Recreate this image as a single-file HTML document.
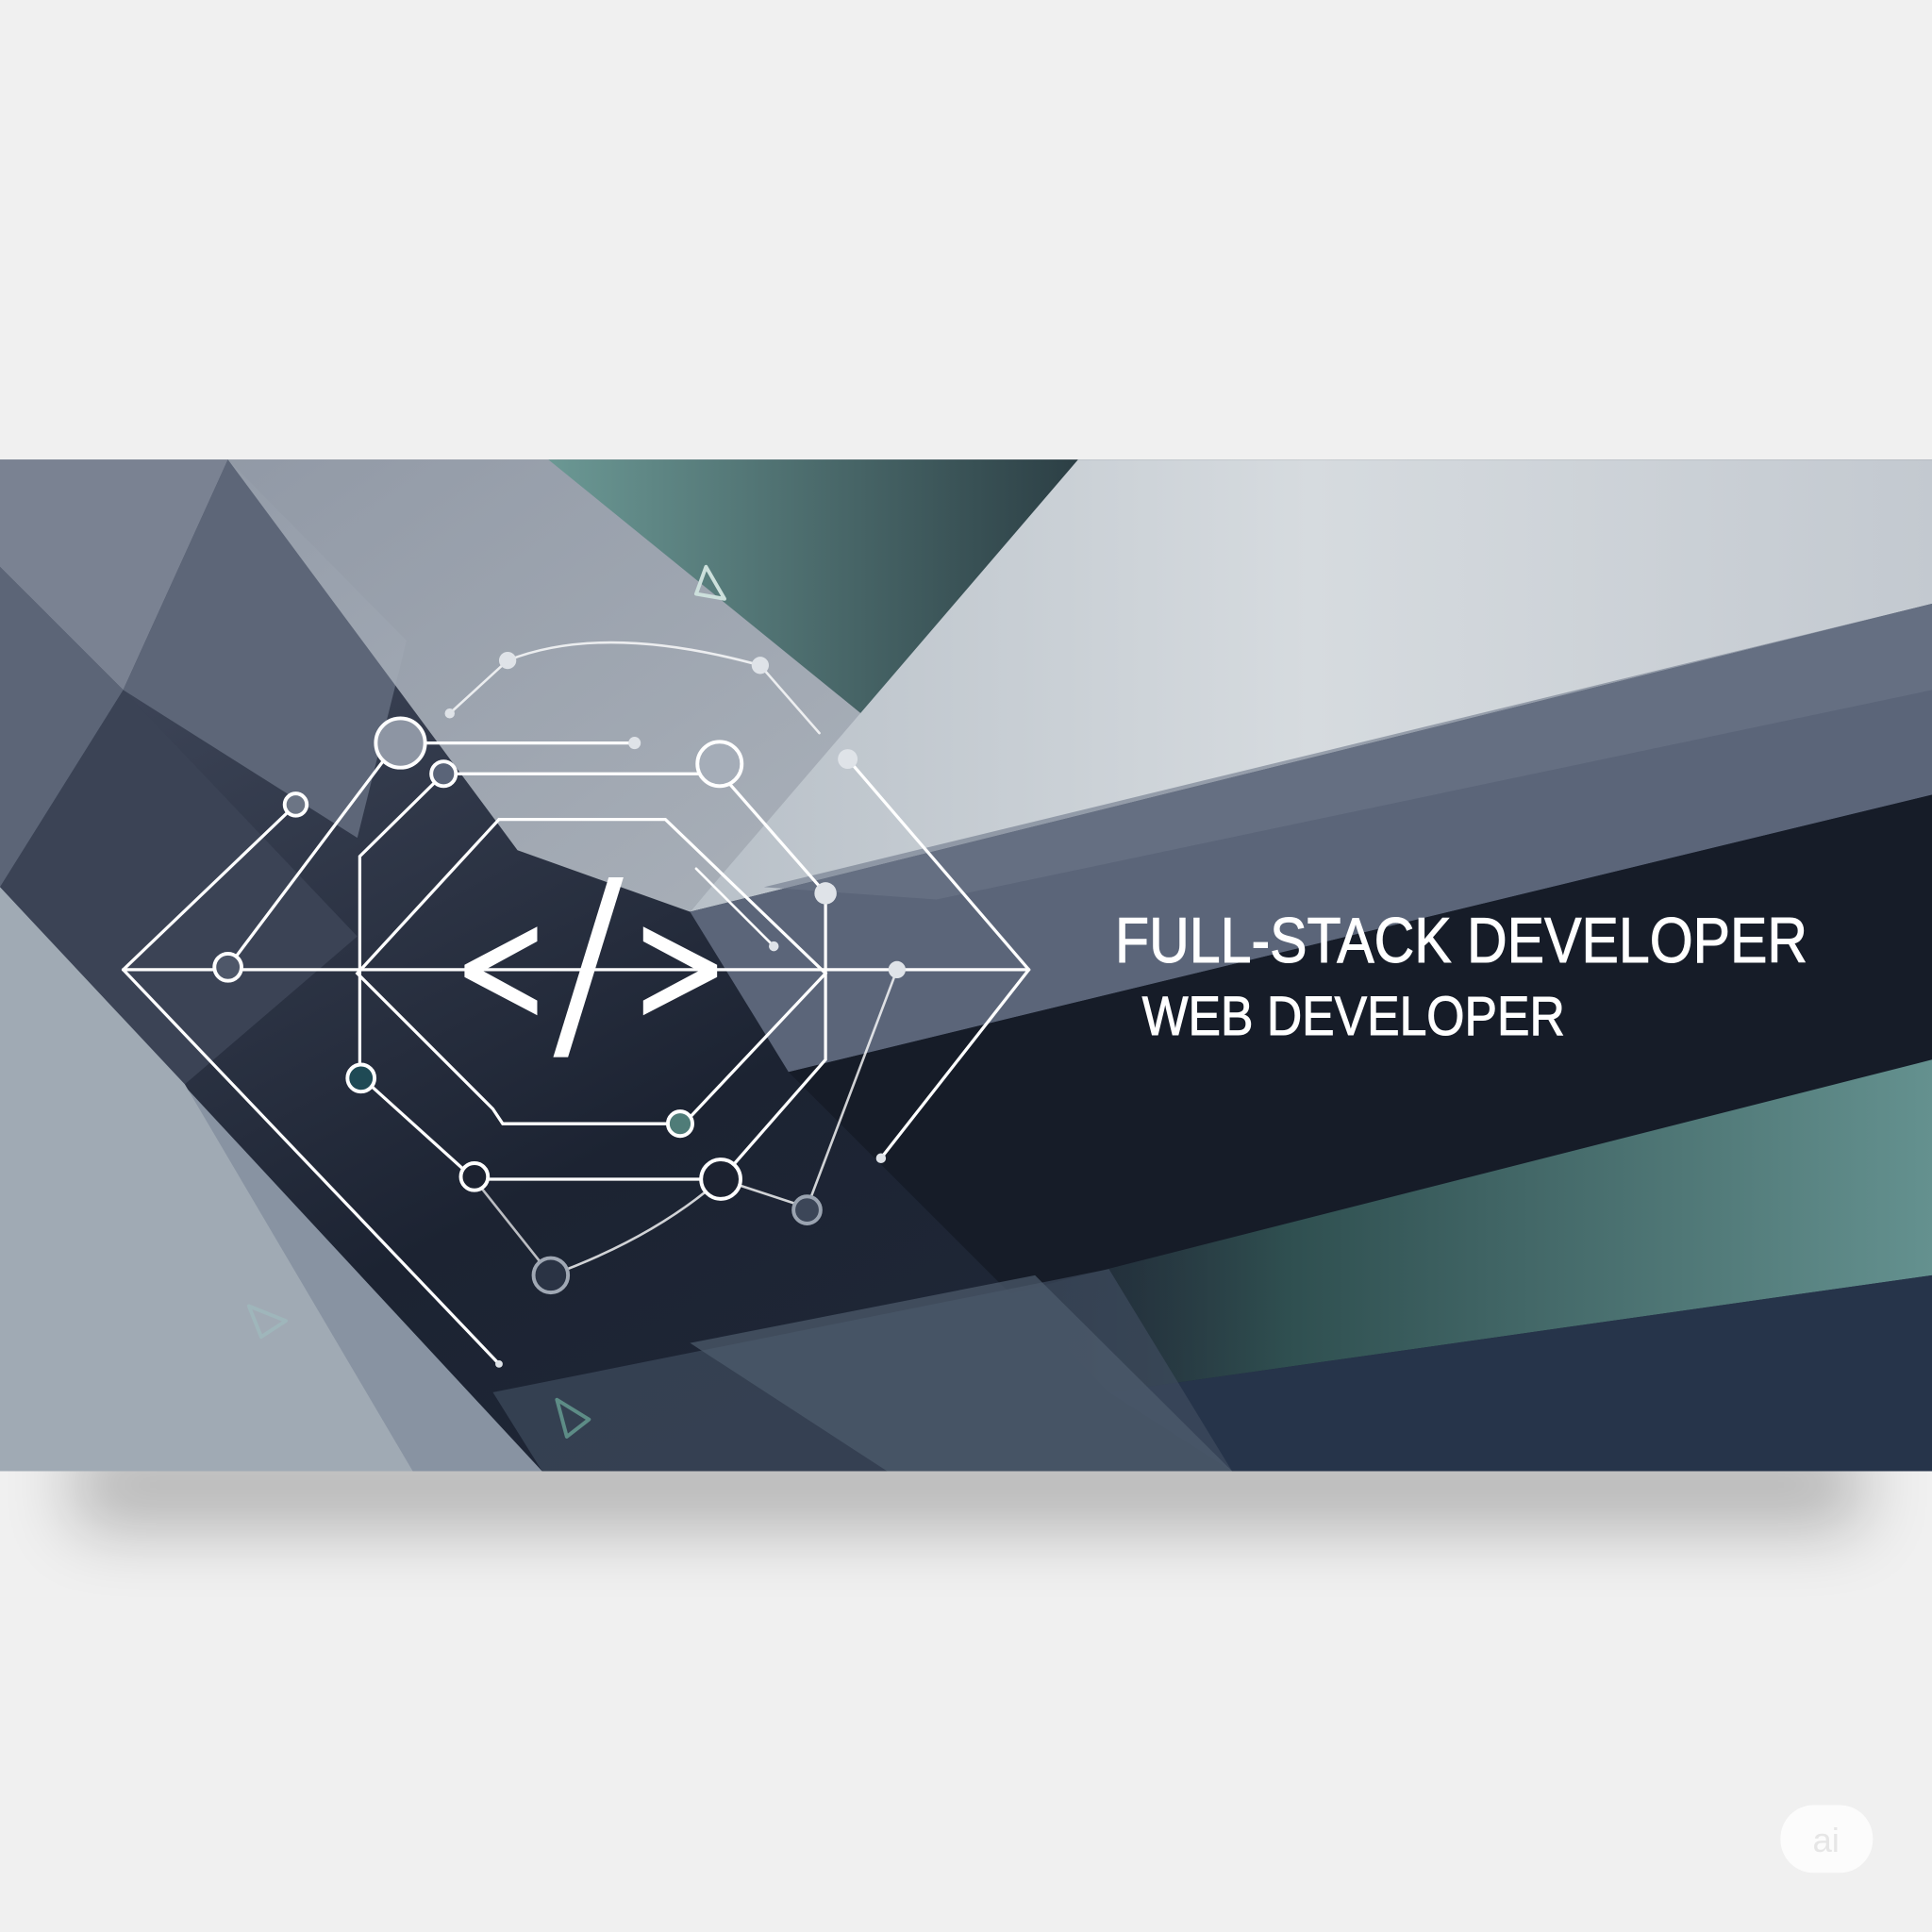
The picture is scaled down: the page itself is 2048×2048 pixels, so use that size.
<!DOCTYPE html>
<html><head><style>
html,body{margin:0;padding:0;background:#f0f0f0;}
svg{display:block}
</style></head><body>
<svg width="2048" height="2048" viewBox="0 0 1568 1568" xmlns="http://www.w3.org/2000/svg">
<defs>
<linearGradient id="bg" x1="0" y1="0" x2="1" y2="1">
<stop offset="0" stop-color="#4a5266"/><stop offset="0.5" stop-color="#1c2332"/><stop offset="1" stop-color="#222c3d"/>
</linearGradient>
<linearGradient id="light" x1="0" y1="0" x2="1" y2="0">
<stop offset="0" stop-color="#b8c0c8"/><stop offset="0.5" stop-color="#d6dbdf"/><stop offset="1" stop-color="#c3c9d0"/>
</linearGradient>
<linearGradient id="teal" x1="0" y1="0" x2="1" y2="0">
<stop offset="0" stop-color="#2a3a40" stop-opacity="0"/><stop offset="0.3" stop-color="#2f4f50"/><stop offset="1" stop-color="#64918f"/>
</linearGradient>
<linearGradient id="teal2" x1="0" y1="0" x2="1" y2="0">
<stop offset="0" stop-color="#6b9894"/><stop offset="1" stop-color="#2c3f45"/>
</linearGradient>
<linearGradient id="band" x1="0" y1="0" x2="1" y2="1">
<stop offset="0" stop-color="#9aa2ae"/><stop offset="1" stop-color="#b9c0c8"/>
</linearGradient>
<filter id="sh" x="-10%" y="-80%" width="120%" height="260%"><feGaussianBlur stdDeviation="28"/></filter>
</defs>
<rect width="1568" height="1568" fill="#f0f0f0"/>
<rect x="60" y="1170" width="1450" height="70" fill="#000" opacity="0.25" filter="url(#sh)"/>
<svg x="0" y="373" width="1568" height="821" viewBox="0 373 1568 821">
<rect x="0" y="373" width="1568" height="821" fill="url(#bg)"/>
<!-- left -->
<polygon points="0,373 185,373 100,560 0,460" fill="#7a8292"/>
<polygon points="0,460 100,560 0,720" fill="#5c6577"/>
<polygon points="100,560 185,373 330,520 290,680" fill="#5d6678"/>
<polygon points="0,720 100,560 290,760 150,880" fill="#3b4355"/>
<polygon points="0,720 440,1194 0,1194" fill="#8893a2"/>
<polygon points="0,720 150,880 335,1194 0,1194" fill="#a0aab4"/>
<!-- light diagonal band -->
<polygon points="185,373 450,373 700,580 560,740 420,690" fill="url(#band)" opacity="0.9"/>
<!-- teal top -->
<polygon points="445,373 875,373 700,580" fill="url(#teal2)"/>
<!-- top right light -->
<polygon points="875,373 1568,373 1568,490 560,740" fill="url(#light)"/>
<!-- grey band -->
<polygon points="560,740 1568,490 1568,645 640,870" fill="#5b6579"/>
<polygon points="620,720 1568,490 1568,560 760,730" fill="#6d7689" opacity="0.6"/>
<!-- dark band -->
<polygon points="640,870 1568,645 1568,860 820,1050" fill="#161c28"/>
<!-- teal band -->
<polygon points="820,1050 1568,860 1568,1035 900,1130" fill="url(#teal)"/>
<!-- bottom navy -->
<polygon points="900,1130 1568,1035 1568,1194 1000,1194" fill="#26344a"/>
<polygon points="400,1130 900,1030 1000,1194 440,1194" fill="#3f4c5e" opacity="0.7"/>
<polygon points="560,1090 840,1035 1000,1194 720,1194" fill="#4f5c6d" opacity="0.7"/>
</svg>
<!-- network -->
<g fill="none" stroke="#fff" stroke-width="2.5" stroke-linecap="round">
<polyline points="405,665 540,665 670,790 555,912 408,912 400,900 290,790 405,665"/>
<polyline points="292,790 292,695 360,628 585,628 670,725 670,860 585,957 385,957 292,873 292,790"/>
<line x1="100" y1="787" x2="835" y2="787"/>
<line x1="100" y1="787" x2="240" y2="653"/>
<line x1="185" y1="785" x2="322" y2="603"/>
<line x1="337" y1="603" x2="515" y2="603"/>
<line x1="100" y1="787" x2="405" y2="1107"/>
<line x1="688" y1="616" x2="835" y2="787"/>
<line x1="835" y1="787" x2="715" y2="940"/>
<path d="M365,579 L412,536 Q490,505 617,540 L665,595" stroke-width="2" opacity="0.8"/>
<line x1="565" y1="705" x2="628" y2="768" stroke-width="2"/>
<line x1="728" y1="787" x2="655" y2="980" stroke-width="2" opacity="0.8"/>
<line x1="385" y1="957" x2="447" y2="1035" stroke-width="2" opacity="0.7"/>
<path d="M447,1035 Q530,1005 585,957 L655,980" stroke-width="2" opacity="0.8"/>
</g>
<g stroke="#fff" stroke-width="3">
<circle cx="325" cy="603" r="20" fill="#8d95a3"/>
<circle cx="584" cy="620" r="18" fill="#a5adb8"/>
<circle cx="360" cy="628" r="10" fill="#5a6478"/>
<circle cx="240" cy="653" r="9" fill="#6c7585"/>
<circle cx="185" cy="785" r="11" fill="#4e5769"/>
<circle cx="293" cy="875" r="11" fill="#1f4a55"/>
<circle cx="552" cy="912" r="10" fill="#4f7c78"/>
<circle cx="385" cy="955" r="11" fill="#1c2230"/>
<circle cx="585" cy="957" r="16" fill="#1c2230"/>
<circle cx="655" cy="982" r="11" fill="#3c4658" stroke="#9aa3b0"/>
<circle cx="447" cy="1035" r="14" fill="#2a3344" stroke="#a0a8b4"/>
</g>
<g fill="#dfe3e8">
<circle cx="412" cy="536" r="7"/><circle cx="617" cy="540" r="7"/><circle cx="688" cy="616" r="8"/>
<circle cx="670" cy="725" r="9"/><circle cx="728" cy="787" r="7"/><circle cx="515" cy="603" r="5"/>
<circle cx="365" cy="579" r="4"/><circle cx="628" cy="768" r="4"/><circle cx="715" cy="940" r="4"/><circle cx="405" cy="1107" r="3"/>
</g>
<g fill="none" stroke-width="3" stroke-linejoin="round">
<polygon points="573,460 565,482 588,486" stroke="#cde0dc"/>
<polygon points="202,1060 232,1072 212,1085" stroke="#9fb6bb"/>
<polygon points="452,1136 478,1152 460,1166" stroke="#5d8c86"/>
</g>
<g fill="#fff">
<polygon points="377,783 436,752 436,764 392,788 436,812 436,824 377,793"/>
<polygon points="494,712 506,712 461,858 449,858"/>
<polygon points="582,783 522,752 522,764 567,788 522,812 522,824 582,793"/>
</g>
<g font-family="'Liberation Sans', sans-serif" fill="#fff" stroke="#fff" stroke-width="0.8">
<text x="905" y="781" font-size="52" textLength="562" lengthAdjust="spacingAndGlyphs">FULL-STACK DEVELOPER</text>
<text x="927" y="840" font-size="45" textLength="343" lengthAdjust="spacingAndGlyphs">WEB DEVELOPER</text>
</g>
<rect x="1445" y="1465" width="75" height="55" rx="27" fill="#fff" opacity="0.8"/>
<text x="1482" y="1503" font-family="'Liberation Sans', sans-serif" font-size="28" fill="#e6e6e6" text-anchor="middle">ai</text>
</svg>
</body></html>
